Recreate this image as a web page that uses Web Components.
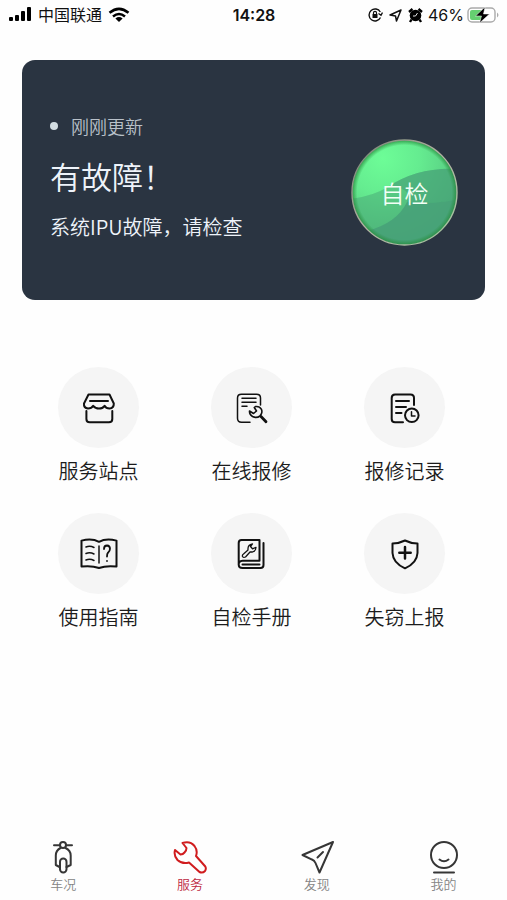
<!DOCTYPE html>
<html lang="zh-CN">
<head>
<meta charset="utf-8">
<meta name="viewport" content="width=device-width, initial-scale=1">
<title>服务</title>
<style>
  body { margin: 0; background: #fefefe; color: #1c1c1c; font-family: Inter, "Noto Sans CJK SC", sans-serif; }
</style>
</head>
<body>
<service-app></service-app>
<script>
const define = (name, html) => {
  const template = document.createElement('template');
  template.innerHTML = html;
  customElements.define(name, class extends HTMLElement {
    constructor() {
      super();
      this.attachShadow({ mode: 'open' }).append(template.content.cloneNode(true));
    }
  });
};

define('status-bar', `
<style>
  :host { display: grid; grid-template-columns: 1fr auto 1fr; align-items: center; height: 30px; padding: 0 7px 0 8px; color: #111; font-size: 16px; line-height: 20px; }
  div { display: flex; align-items: center; }
  .right { justify-content: flex-end; }
  svg { display: block; flex: none; }
  .signal { margin-right: 6px; }
  .wifi { margin-left: 6px; }
  .lock, .nav { margin-right: 6px; }
  .alarm { margin-right: 5px; }
  .battery { margin-left: 3px; }
  time { font-weight: 600; }
</style>
<div>
  <svg class="signal" width="24" height="16" viewBox="0 0 24 16" fill="#000"><rect x="1" y="10" width="4" height="4" rx="1"/><rect x="7" y="8" width="4" height="6" rx="1"/><rect x="13" y="4" width="4" height="10" rx="1"/><rect x="19" y="0" width="4" height="14" rx="1"/></svg>
  <span>中国联通</span>
  <svg class="wifi" width="22" height="16" viewBox="0 0 22 16" fill="none" stroke="#000" stroke-width="2.6"><path d="M1.500 5.800Q11-2 20.500 5.800M5 9.400Q11 4.600 17 9.400"/><path d="M11 15l-3.600-3.600Q11 8.700 14.600 11.400Z" fill="#000" stroke="none"/></svg>
</div>
<time>14:28</time>
<div class="right">
  <svg class="lock" width="15" height="16" viewBox="0 0 15 16" fill="none" stroke="#111" stroke-width="1.400"><path d="M12.300 5A6 6 0 1 0 12.500 10.500M10.500 6.500l2.500 1.800 1.500-2.800"/><rect x="4.500" y="7" width="5" height="4" fill="#111" stroke="none"/><path d="M5.500 7V5.800a1.500 1.500 0 0 1 3 0V7" stroke-width="1.200"/></svg>
  <svg class="nav" width="13" height="14" viewBox="0 0 13 14" fill="none" stroke="#111" stroke-width="1.500" stroke-linejoin="round"><path d="M12 2L1 7l5.500 1L7.500 13Z"/></svg>
  <svg class="alarm" width="15" height="16" viewBox="0 0 15 16"><circle cx="7.500" cy="8.500" r="5.800" fill="#000"/><path d="M1 5L4.500 2M14 5L10.500 2M3.500 12.500L2 15M11.500 12.500L13 15" stroke="#000" stroke-width="2.400"/><path d="M9.500 6L7.500 9H5" fill="none" stroke="#fff" stroke-width=".9"/></svg>
  <span>46%</span>
  <svg class="battery" width="33" height="18" viewBox="0 0 33 18"><rect x="1" y="2" width="27" height="14" rx="4" fill="#fff" stroke="#aaa" stroke-width="1.400"/><path d="M30 6.500q3 2.500 0 5Z" fill="#aaa"/><rect x="3" y="4" width="12" height="10" rx="2" fill="#65cf70"/><path d="M18 1L8.500 10h6L12.500 17L22.500 8h-6Z" fill="#000" stroke="#fff" stroke-width=".5"/></svg>
</div>`);

define('check-button', `
<style>
  :host { display: block; }
  button { display: grid; place-items: center; width: 107px; height: 107px; padding: 0; border: 0; border-radius: 50%; background: none; color: #f2fff6; font: 350 24px/32px "Noto Sans CJK SC", sans-serif; cursor: pointer; }
  svg, span { grid-area: 1 / 1; }
</style>
<button type="button">
  <svg width="107" height="107" viewBox="0 0 107 107" aria-hidden="true">
    <defs>
      <radialGradient id="base" cx="30%" cy="18%" r="85%"><stop offset="0" stop-color="#6dfd97"/><stop offset=".4" stop-color="#65ec90"/><stop offset="1" stop-color="#52bd7c"/></radialGradient>
      <linearGradient id="ring" x1="0" y1="0" x2="1" y2="1"><stop offset="0" stop-color="#71806f"/><stop offset=".5" stop-color="#b5b6a5"/><stop offset="1" stop-color="#9fc79c"/></linearGradient>
      <radialGradient id="rim"><stop offset=".91" stop-color="#278d3d" stop-opacity="0"/><stop offset="1" stop-color="#278d3d" stop-opacity=".75"/></radialGradient>
      <clipPath id="disc"><circle cx="53.500" cy="53.500" r="52"/></clipPath>
    </defs>
    <g clip-path="url(#disc)">
      <rect width="107" height="107" fill="url(#base)"/>
      <path d="M0 60Q22 57 37 48Q66 28 107 30V107H0Z" fill="#48a576" opacity=".5"/>
      <path d="M37 48Q66 28 107 30V60Q82 66 56 63Q62 48 37 48Z" fill="#46a078" opacity=".5"/>
      <path d="M16 92Q46 84 56 63Q82 66 107 60V107H16Z" fill="#46a078" opacity=".85"/>
    </g>
    <circle cx="53.500" cy="53.500" r="52" fill="url(#rim)"/>
    <circle cx="53.500" cy="53.500" r="52.500" fill="none" stroke="url(#ring)" stroke-width="1.400"/>
  </svg>
  <span><slot></slot></span>
</button>`);

define('status-card', `
<style>
  :host { display: flex; align-items: flex-end; justify-content: space-between; margin: 30px 22px 0; padding: 54px 27px 54px 28px; border-radius: 13px; background: #2a3441; color: #eef3fa; }
  p, h1 { margin: 0; font-weight: 350; }
  .time { display: flex; align-items: center; gap: 13px; color: #b9c1c9; font-size: 18px; line-height: 24px; }
  .time::before { content: ""; width: 8px; height: 8px; border-radius: 50%; background: #d3dde2; }
  h1 { margin-top: 15px; font-size: 31px; line-height: 46px; }
  .detail { margin-top: 13px; font-size: 20px; line-height: 30px; }
  .text { padding-bottom: 4px; font-family: "Noto Sans CJK SC", sans-serif; }
</style>
<div class="text">
  <p class="time"><slot name="time"></slot></p>
  <h1><slot name="title"></slot></h1>
  <p class="detail"><slot name="detail"></slot></p>
</div>
<slot name="action"></slot>`);

define('service-item', `
<style>
  :host { display: block; }
  a { display: flex; flex-direction: column; align-items: center; color: #1c1c1c; text-decoration: none; font: 350 20px/30px "Noto Sans CJK SC", sans-serif; }
  .disc { display: grid; place-items: center; width: 81px; height: 81px; margin-bottom: 8px; border-radius: 50%; background: #f5f5f5; }
</style>
<a href="#"><span class="disc"><slot name="icon"></slot></span><slot></slot></a>`);

define('tab-item', `
<style>
  :host { display: block; flex: 1 1 0; --ink: #363636; --label: #858585; }
  :host([active]) { --ink: #d01c1e; --label: #bd2942; }
  a { display: flex; flex-direction: column; align-items: center; color: var(--label); text-decoration: none; font: 350 13px/20px "Noto Sans CJK SC", sans-serif; }
</style>
<a href="#"><slot name="icon"></slot><slot></slot></a>`);

define('service-app', `
<style>
  :host { display: flex; flex-direction: column; min-height: 100vh; }
  main { flex: 1; }
  .grid { display: grid; grid-template-columns: repeat(3, 1fr); row-gap: 27px; margin: 67px 26px 0 22px; }
  nav { display: flex; padding: 20px 0 6px; }
  svg { display: block; fill: none; stroke: #111; stroke-width: 2; stroke-linecap: round; stroke-linejoin: round; }
  nav svg { stroke: var(--ink); }
  .thin { stroke-width: 1.500; }
</style>
<status-bar></status-bar>
<main>
  <status-card>
    <span slot="time">刚刚更新</span>
    <span slot="title">有故障！</span>
    <span slot="detail">系统IPU故障，请检查</span>
    <check-button slot="action">自检</check-button>
  </status-card>
  <div class="grid">
    <service-item>
      <svg slot="icon" width="40" height="40" viewBox="0 0 40 40"><path d="M9.500 6.500H30.500L34.800 15.500Q35 20 30.500 20.600Q27 20.500 25.600 17.800Q23.500 20.600 20 20.600Q16.500 20.600 14.200 17.800Q12.500 20.600 9 20.600Q4.500 20 5 15.500Z"/><path d="M11 13H29M7.400 23V31Q7.400 34.300 10.700 34.300H30Q33.300 34.300 33.300 31V23"/></svg>
      服务站点
    </service-item>
    <service-item>
      <svg slot="icon" width="40" height="40" viewBox="0 0 40 40"><path class="thin" d="M18 34.300H9.500Q5.500 34.300 5.500 30.300V10Q5.500 6.300 9.500 6.300H24.500Q28.500 6.300 28.500 10V17M10 10.300H24M10 14.300H24M10 18.300H15"/><path d="M23.500 18.500Q27.500 18 29.300 21.200Q30.500 23.500 29.300 26L28 28Q24.500 30.500 20.500 28.500Q17.300 26.500 17.500 23L21.500 25.500L24.500 23L22.300 19.500Z" stroke-width="1.600"/><path d="M29 28.500L34 33.800" stroke-width="2.800"/></svg>
      在线报修
    </service-item>
    <service-item>
      <svg slot="icon" width="40" height="40" viewBox="0 0 40 40"><path d="M18 34.300H10Q6.700 34.300 6.700 31V10Q6.700 6.500 10 6.500H25.500Q29 6.500 29 10V17M11 13H24M11 19H21M11 25H16.500"/><circle cx="26.800" cy="27.300" r="6.800"/><path class="thin" d="M26.500 23.800V28H30"/></svg>
      报修记录
    </service-item>
    <service-item>
      <svg slot="icon" width="40" height="40" viewBox="0 0 40 40"><path d="M2.500 6.600Q13 4 20 7.800Q27 4 37.500 6.600V32.500Q27 31.300 20 34Q13 31.300 2.500 32.500Z"/><path class="thin" d="M20 12V29M7 13Q11 11.500 15 13.500M7 19.500Q11 18 15 20M7 26Q11 24.500 15 26.500"/><path d="M25 15Q25 11.500 28 11.500Q31 11.700 31 14.800Q31 17 29 18.700Q28 19.800 28 22.500M28 27v.1" stroke-width="1.800"/></svg>
      使用指南
    </service-item>
    <service-item>
      <svg slot="icon" width="40" height="40" viewBox="0 0 40 40"><path d="M6.700 31V9Q6.700 6 9.500 6H27.500V26.800H10.500Q6.700 27 6.700 30.500Q6.700 34 10.500 34H28.500Q31.500 34 31.500 31V9M10.500 30.500H27.500"/><path d="M20.500 9.800L18.500 12.500L20.500 14.800L24 13.300Q24 17 20.500 18H18L13.500 23Q11.500 24 10.500 22.500Q10 21 11.500 20L16 16Q15.500 10.500 20.500 9.800Z" stroke-width="1.300"/></svg>
      自检手册
    </service-item>
    <service-item>
      <svg slot="icon" width="40" height="40" viewBox="0 0 40 40"><path d="M20 6.500Q26 9.500 32.500 9.500V19Q32 29 20 34.300Q8 29 7.500 19V9.500Q14 9.500 20 6.500Z"/><path d="M20 13V24.500M14.300 18.700H25.700" stroke-width="2.500"/></svg>
      失窃上报
    </service-item>
  </div>
</main>
<nav>
  <tab-item>
    <svg slot="icon" width="36" height="34" viewBox="0 0 36 34" stroke-width="1.800"><path d="M9 5.300H15M21 5.300H27M15.500 8Q10.800 10.500 10.800 15.500V25L14.500 27M20.500 8Q25.700 10.500 25.700 15.500V25L21.500 27"/><circle cx="18" cy="5" r="3"/><rect x="15" y="18.500" width="6.500" height="14" rx="3.200"/></svg>
    车况
  </tab-item>
  <tab-item active>
    <svg slot="icon" width="36" height="34" viewBox="0 0 36 34"><path d="M10.500 3Q18 .5 22.500 6Q26 10.500 24 16L33.300 26.500Q34.500 28.500 33 31Q30.500 33.500 27.500 32L17 22.500Q10.500 24.500 5.500 20Q1.500 15.500 3 10L8.500 14.500Q11 14.300 12.500 12.500Q14.500 10.500 14.500 8Z"/></svg>
    服务
  </tab-item>
  <tab-item>
    <svg slot="icon" width="36" height="34" viewBox="0 0 36 34"><path d="M34 2L3.500 15L12.500 19.300Q15.500 20.500 16.500 23L20.500 32.500Z"/><path d="M18.500 17.500L24 12"/></svg>
    发现
  </tab-item>
  <tab-item>
    <svg slot="icon" width="36" height="34" viewBox="0 0 36 34"><circle cx="18" cy="15" r="13"/><path d="M13.500 19.500Q18 23 22.500 19.500M8 32.500H28"/></svg>
    我的
  </tab-item>
</nav>`);
</script>
</body>
</html>
